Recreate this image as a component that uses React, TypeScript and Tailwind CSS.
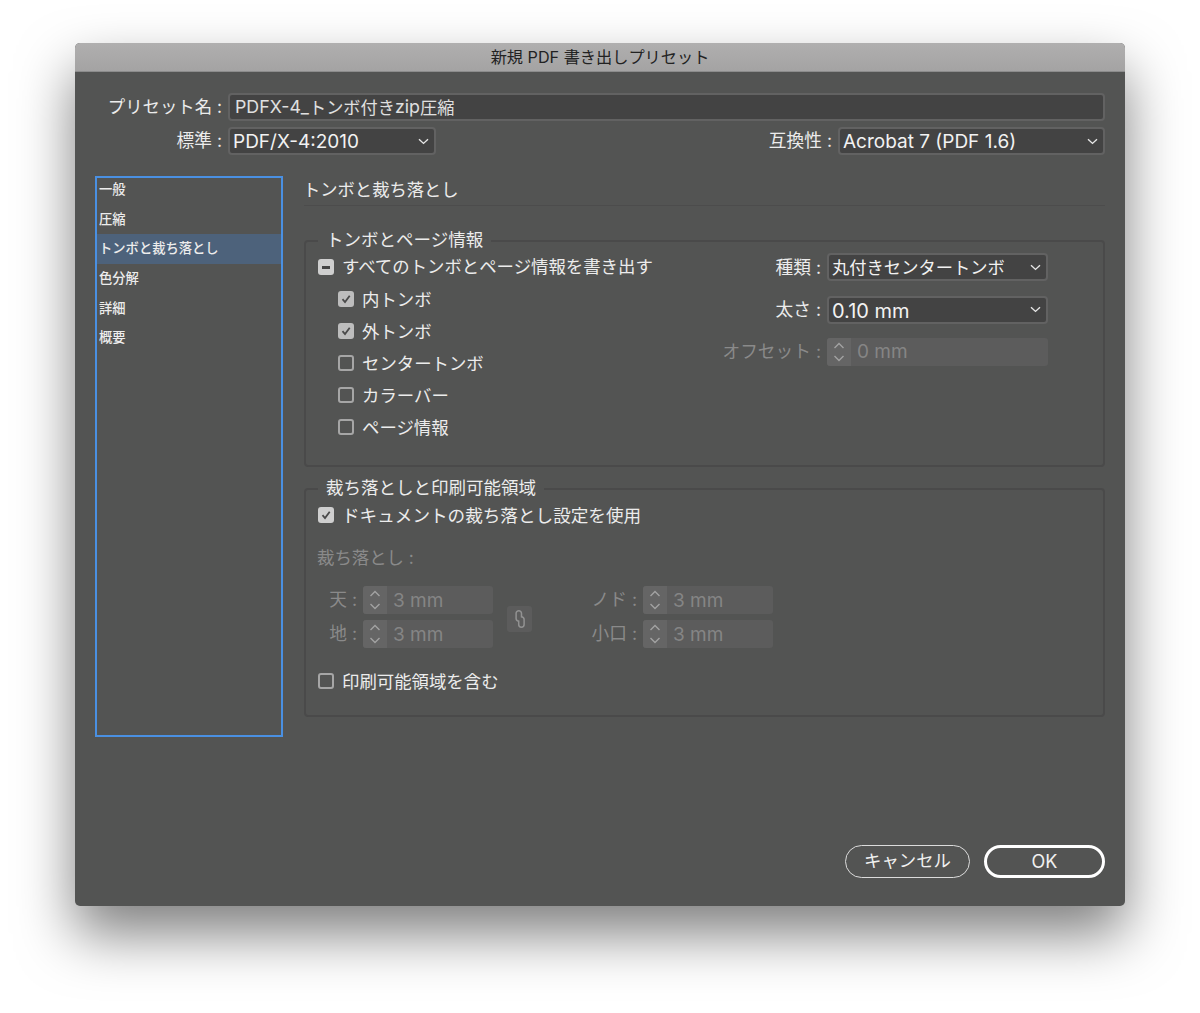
import type { ReactNode } from 'react';

const font = "font-['Inter','Noto_Sans_CJK_JP',sans-serif]";

function Chevron() {
  return (
    <svg width="11" height="7" viewBox="0 0 11 7" fill="none" className="shrink-0">
      <path d="M1 1.2 5.5 5.4 10 1.2" stroke="#e6e6e6" strokeWidth="1.4" />
    </svg>
  );
}

function Select({ value, className, textClass }: { value: string; className: string; textClass?: string }) {
  return (
    <div className={`flex items-center justify-between h-[28px] bg-[#434343] border-2 border-[#626262] rounded-[4px] pl-[3px] pr-[5px] text-[#f2f2f2] ${className}`}>
      <span className={`whitespace-nowrap pt-[2px] ${textClass ?? 'text-[19px]'}`}>{value}</span>
      <Chevron />
    </div>
  );
}

function Stepper({ value, className }: { value: string; className: string }) {
  return (
    <div className={`flex items-center h-[28px] bg-[#5c5c5c] rounded-[3px] text-[19px] text-[#858585] ${className}`}>
      <div className="flex items-center justify-center w-[24px] h-full bg-[#656565] rounded-l-[3px]">
        <svg width="14" height="24" viewBox="0 0 14 24" fill="none">
          <path d="M2.5 8 7 3.5 11.5 8M2.5 16 7 20.5 11.5 16" stroke="#a2a2a2" strokeWidth="1.4" />
        </svg>
      </div>
      <span className="pl-[6px] pt-[2px] whitespace-nowrap">{value}</span>
    </div>
  );
}

function Box({ state, dim }: { state: 'off' | 'on' | 'mixed'; dim?: boolean }) {
  if (state === 'off') {
    return <div className="w-[16px] h-[16px] shrink-0 border-2 border-[#a6a6a6] rounded-[3px]" />;
  }
  return (
    <div className={`flex items-center justify-center w-[16px] h-[16px] shrink-0 rounded-[3px] ${dim ? 'bg-[#bdbdbd]' : 'bg-[#cfcfcf]'}`}>
      {state === 'on' ? (
        <svg width="12" height="12" viewBox="0 0 12 12" fill="none">
          <path d="M2.5 6.2 5 9 9.7 2.8" stroke="#4a4a4a" strokeWidth="1.8" />
        </svg>
      ) : (
        <div className="w-[8px] h-[3px] bg-[#444444]" />
      )}
    </div>
  );
}

function Check({ state, dim, className, children }: { state: 'off' | 'on' | 'mixed'; dim?: boolean; className?: string; children: ReactNode }) {
  return (
    <div className={`flex items-center h-[28px] text-[#ececec] text-[17.4px] whitespace-nowrap ${className ?? ''}`}>
      <Box state={state} dim={dim} />
      {children}
    </div>
  );
}

function Group({ title, className, children }: { title: string; className: string; children: ReactNode }) {
  return (
    <fieldset className={`border-2 border-[#4a4a4a] rounded-[4px] pl-[12px] ${className}`}>
      <legend className="px-[8px] h-[24px] leading-[22px] text-[17.5px] text-[#ececec] whitespace-nowrap">{title}</legend>
      {children}
    </fieldset>
  );
}

const navItems = ['一般', '圧縮', 'トンボと裁ち落とし', '色分解', '詳細', '概要'];

export default function App() {
  return (
    <div className={`w-[1200px] h-[1013px] bg-white pl-[75px] pt-[43px] overflow-hidden ${font}`}>
      <div className="flex flex-col w-[1050px] h-[863px] bg-[#535453] rounded-[5px] shadow-[0_28px_56px_rgba(0,0,0,0.5)]">
        <div className="flex items-center justify-center h-[29px] shrink-0 rounded-t-[5px] bg-gradient-to-b from-[#b0afaf] to-[#a4a3a3] border-b border-[#8c8c8c] text-[16.2px] text-[#222222]">
          新規 PDF 書き出しプリセット
        </div>

        <div className="flex flex-col flex-1 px-[20px] pt-[21px] pb-[28px]">
          <div className="flex items-center h-[28px] text-[17.4px] text-[#ececec]">
            <span className="w-[127px] text-right whitespace-nowrap">プリセット名 :</span>
            <div className="flex items-center flex-1 h-full ml-[6px] pl-[5px] pt-[1px] bg-[#434343] border-2 border-[#626262] rounded-[4px] text-[17.8px] text-[#e0e0e0]">
              PDFX-4_<span className="text-[17.2px]">トンボ付き</span>zip<span className="text-[17.2px]">圧縮</span>
            </div>
          </div>
          <div className="flex items-center h-[28px] mt-[6px] text-[17.7px] text-[#ececec]">
            <span className="w-[127px] text-right whitespace-nowrap">標準 :</span>
            <Select value="PDF/X-4:2010" className="w-[208px] ml-[6px]" />
            <span className="ml-auto mr-[6px] whitespace-nowrap">互換性 :</span>
            <Select value="Acrobat 7 (PDF 1.6)" className="w-[267px]" />
          </div>

          <div className="flex mt-[21px] gap-[21px]">
            <div className="w-[188px] h-[561px] shrink-0 border-2 border-[#4a90e2] text-[13.3px] font-medium text-[#ececec]">
              {navItems.map((item, i) => (
                <div key={item} className={`flex items-center h-[29.7px] pl-[2px] whitespace-nowrap ${i === 2 ? 'bg-[#4d627b]' : ''} ${i === 0 ? 'mt-[-3px]' : ''}`}>
                  {item}
                </div>
              ))}
            </div>

            <div className="flex-1 min-w-0">
              <div className="flex items-center h-[30px] pb-[2px] border-b border-[#4c4c4c] text-[17.3px] text-[#ececec] whitespace-nowrap">
                <span className="ml-[-1px]">トンボと裁ち落とし</span>
              </div>

              <Group title="トンボとページ情報" className="h-[238px] mt-[23px]">
                <div className="flex justify-between pr-[55px]">
                  <div>
                    <Check state="mixed">
                      <span className="ml-[8px]">すべてのトンボとページ情報を書き出す</span>
                    </Check>
                    <div className="flex flex-col gap-[4px] mt-[4px] pl-[20px]">
                      <Check state="on" dim><span className="ml-[8px] pt-[2px]">内トンボ</span></Check>
                      <Check state="on" dim><span className="ml-[8px] pt-[2px]">外トンボ</span></Check>
                      <Check state="off"><span className="ml-[8px] pt-[2px]">センタートンボ</span></Check>
                      <Check state="off"><span className="ml-[8px] pt-[2px]">カラーバー</span></Check>
                      <Check state="off"><span className="ml-[8px] pt-[2px]">ページ情報</span></Check>
                    </div>
                  </div>
                  <div className="flex flex-col gap-[14px] text-[17.7px]">
                    <div className="flex items-center justify-end gap-[6px] text-[#ececec]">
                      <span className="pt-[2px]">種類 :</span>
                      <Select value="丸付きセンタートンボ" className="w-[221px]" textClass="text-[17.3px]" />
                    </div>
                    <div className="flex items-center justify-end gap-[6px] text-[#ececec]">
                      <span className="pt-[1px]">太さ :</span>
                      <Select value="0.10 mm" className="w-[221px]" textClass="text-[20px]" />
                    </div>
                    <div className="flex items-center justify-end gap-[6px] text-[#8a8a8a]">
                      <span className="pt-[1px]">オフセット :</span>
                      <Stepper value="0 mm" className="w-[221px]" />
                    </div>
                  </div>
                </div>
              </Group>

              <Group title="裁ち落としと印刷可能領域" className="h-[240px] mt-[10px]">
                <Check state="on">
                  <span className="ml-[8px] pt-[2px] text-[17.6px]">ドキュメントの裁ち落とし設定を使用</span>
                </Check>
                <div className="flex items-center h-[28px] mt-[15px] text-[17.4px] text-[#8a8a8a] ml-[-1px]">裁ち落とし :</div>
                <div className="flex items-center mt-[14px] text-[17.7px] text-[#8a8a8a]">
                  <div className="flex flex-col gap-[6px]">
                    <div className="flex items-center gap-[6px]">
                      <span className="w-[39px] text-right">天 :</span>
                      <Stepper value="3 mm" className="w-[130px]" />
                    </div>
                    <div className="flex items-center gap-[6px]">
                      <span className="w-[39px] text-right pt-[1px]">地 :</span>
                      <Stepper value="3 mm" className="w-[130px]" />
                    </div>
                  </div>
                  <div className="flex items-center justify-center w-[25px] h-[26px] ml-[14px] mt-[4px] bg-[#5c5c5c] rounded-[3px]">
                    <svg width="12" height="20" viewBox="0 0 12 20" fill="none">
                      <path d="M7.5 8.5V4.5a2.7 2.7 0 0 0-5.4 0v5c0 1.6 1 2.5 2.5 2.8" stroke="#929292" strokeWidth="1.5" />
                      <path d="M4.7 11.5v4a2.7 2.7 0 0 0 5.4 0v-5c0-1.6-1-2.5-2.5-2.8" stroke="#929292" strokeWidth="1.5" />
                    </svg>
                  </div>
                  <div className="flex flex-col gap-[6px]">
                    <div className="flex items-center gap-[6px]">
                      <span className="w-[105px] text-right">ノド :</span>
                      <Stepper value="3 mm" className="w-[130px]" />
                    </div>
                    <div className="flex items-center gap-[6px]">
                      <span className="w-[105px] text-right pt-[1px]">小口 :</span>
                      <Stepper value="3 mm" className="w-[130px]" />
                    </div>
                  </div>
                </div>
                <Check state="off" className="mt-[19px]">
                  <span className="ml-[8px] pt-[2px]">印刷可能領域を含む</span>
                </Check>
              </Group>
            </div>
          </div>

          <div className="flex justify-end gap-[14px] mt-auto text-[17.4px] text-[#f0f0f0]">
            <button className="w-[125px] h-[33px] border-[1.5px] border-[#dcdcdc] rounded-full">キャンセル</button>
            <button className="w-[121px] h-[33px] border-[3px] border-white rounded-full text-[18px]">OK</button>
          </div>
        </div>
      </div>
    </div>
  );
}
